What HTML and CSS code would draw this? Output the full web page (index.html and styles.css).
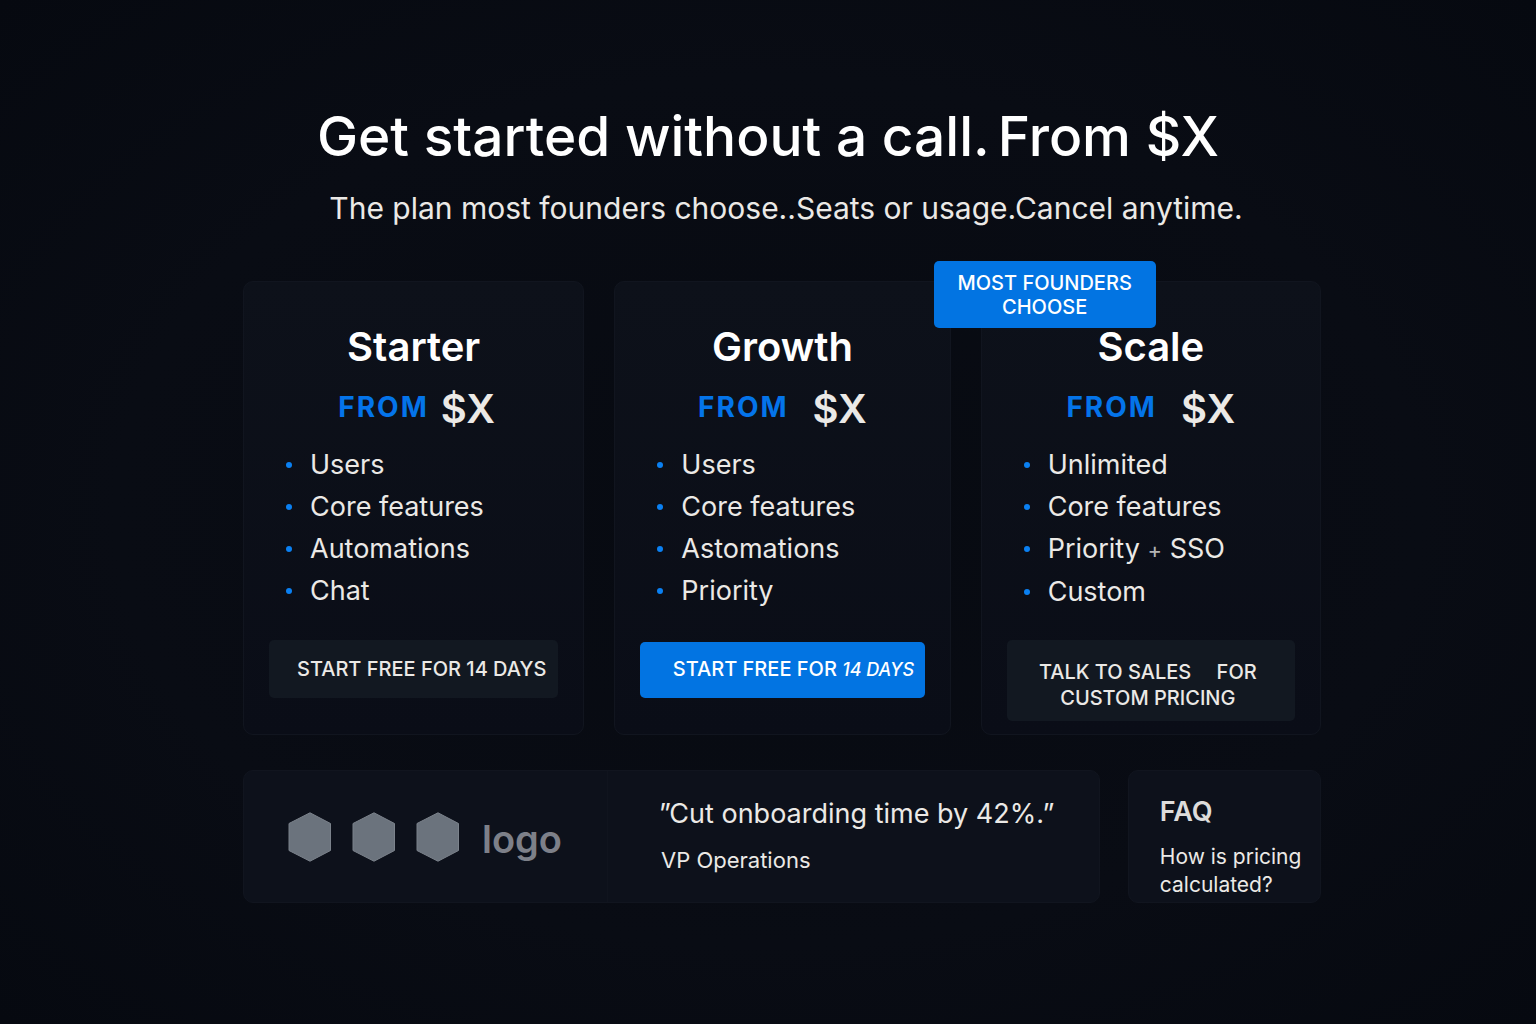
FILE: index.html
```
<!DOCTYPE html>
<html lang="en">
<head>
    <meta charset="UTF-8">
    <meta name="viewport" content="width=device-width, initial-scale=1.0">
    <title>Pricing</title>
    <link rel="stylesheet" href="styles.css">
</head>
<body>
    <header class="hero">
        <h1><span>Get started without a call.</span> <span>From $X</span></h1>
        <p>The plan most founders choose..Seats or usage.Cancel anytime.</p>
    </header>
    <main class="container">
        <section class="plans">
            <article class="card">
                <h2>Starter</h2>
                <p class="price price-tight"><span class="from">FROM</span><span class="amount">$X</span></p>
                <ul>
                    <li>Users</li>
                    <li>Core features</li>
                    <li>Automations</li>
                    <li>Chat</li>
                </ul>
                <button type="button" class="btn btn-dark btn-trial">START FREE FOR 14 DAYS</button>
            </article>
            <article class="card">
                <h2>Growth</h2>
                <p class="price"><span class="from">FROM</span><span class="amount">$X</span></p>
                <ul>
                    <li>Users</li>
                    <li>Core features</li>
                    <li>Astomations</li>
                    <li>Priority</li>
                </ul>
                <button type="button" class="btn btn-blue">START FREE FOR <em>14 DAYS</em></button>
            </article>
            <article class="card">
                <div class="badge">MOST FOUNDERS CHOOSE</div>
                <h2>Scale</h2>
                <p class="price"><span class="from">FROM</span><span class="amount">$X</span></p>
                <ul>
                    <li>Unlimited</li>
                    <li>Core features</li>
                    <li>Priority <span class="plus">+</span> SSO</li>
                    <li>Custom</li>
                </ul>
                <button type="button" class="btn btn-dark btn-sales">TALK TO SALES <span class="for">FOR</span><br>CUSTOM PRICING</button>
            </article>
        </section>
        <section class="bottom">
            <div class="panel proof">
                <div class="logos">
                    <svg class="hex" viewBox="0 0 44 50"><path d="M22 .8 42.500 11.500V38.500L22 49.200 1 38.500V11.500Z"/></svg>
                    <svg class="hex" viewBox="0 0 44 50"><path d="M22 .8 42.500 11.500V38.500L22 49.200 1 38.500V11.500Z"/></svg>
                    <svg class="hex" viewBox="0 0 44 50"><path d="M22 .8 42.500 11.500V38.500L22 49.200 1 38.500V11.500Z"/></svg>
                    <span class="logo-text">logo</span>
                </div>
                <div class="quote">
                    <blockquote>”Cut onboarding time by 42%.”</blockquote>
                    <p>VP Operations</p>
                </div>
            </div>
            <div class="panel faq">
                <h3>FAQ</h3>
                <p>How is pricing calculated?</p>
            </div>
        </section>
    </main>
</body>
</html>
```
FILE: styles.css
```
* {
    box-sizing: border-box;
}
body {
    font-family: Inter, "Liberation Sans", sans-serif;
    background: radial-gradient(ellipse at center, #070a11 0%, #090c14 60%, #060910 100%);
    color: #ebe9e6;
    min-height: 100vh;
    margin: 0;
    padding: 100px 0;
}
h1, h2, h3, p, ul, blockquote {
    margin: 0;
}
.hero {
    text-align: center;
}
.hero h1 {
    display: flex;
    justify-content: center;
    gap: 8px;
    font-size: 55px;
    line-height: 72px;
    font-weight: 500;
    color: #fff;
}
.hero p {
    font-size: 30px;
    line-height: 40px;
    margin-top: 16px;
    padding-left: 36px;
}
.container {
    max-width: 1106px;
    margin: 53px auto 0;
    padding-left: 28px;
}
.plans {
    display: grid;
    grid-template-columns: minmax(0, 341fr) minmax(0, 336fr) minmax(0, 340fr);
    gap: 30px;
}
.card {
    position: relative;
    display: flex;
    flex-direction: column;
    height: 454px;
    padding: 40px 25px 0;
    background: linear-gradient(#0d111a, #0a0d17);
    border: 1px solid #11151f;
    border-radius: 10px;
}
.card h2 {
    font-size: 40px;
    line-height: 50px;
    font-weight: 600;
    text-align: center;
    color: #fff;
}
.price {
    display: flex;
    justify-content: center;
    align-items: center;
    gap: 24px;
    height: 50px;
    margin-top: 11px;
}
.price-tight {
    gap: 12px;
    padding-left: 6px;
}
.from {
    font-size: 28px;
    line-height: 34px;
    font-weight: 700;
    letter-spacing: 2px;
    color: #0474ea;
    padding-bottom: 2px;
}
.amount {
    font-size: 40px;
    font-weight: 600;
}
.card ul {
    list-style: none;
    padding: 0 0 0 41px;
    margin-top: 11px;
}
.card li {
    position: relative;
    font-size: 27px;
    line-height: 42px;
}
.card li::before {
    content: "";
    position: absolute;
    left: -24px;
    top: 18px;
    width: 6px;
    height: 6px;
    border-radius: 50%;
    background: #0a80f2;
}
.plus {
    font-size: 22px;
    color: #b4b4b4;
}
.badge {
    position: absolute;
    left: -48px;
    top: -21px;
    width: 222px;
    padding: 10px 20px 9px;
    border-radius: 5px;
    background: #0274e2;
    color: #fff;
    font-size: 20px;
    line-height: 24px;
    font-weight: 500;
    text-align: center;
}
.btn {
    border: none;
    border-radius: 5px;
    font-family: inherit;
    font-size: 20px;
    line-height: 26px;
    font-weight: 500;
    white-space: nowrap;
    cursor: pointer;
}
.btn em {
    font-size: 18px;
}
.btn-dark {
    background: #121821;
    color: #ebe9e6;
}
.btn-trial {
    height: 58px;
    margin-top: 28px;
    padding: 0 8px 0 24px;
}
.btn-blue {
    height: 56px;
    margin-top: 30px;
    padding: 0 8px 2px 30px;
    background: #0274e2;
    color: #fff;
}
.btn-sales {
    height: 81px;
    margin-top: 27px;
    padding: 12px 14px 4px 8px;
}
.for {
    margin-left: 20px;
}
.bottom {
    display: grid;
    grid-template-columns: 856fr 193fr;
    gap: 28px;
    margin-top: 35px;
}
.panel {
    height: 133px;
    background: #0d111b;
    border: 1px solid #11151f;
    border-radius: 10px;
}
.proof {
    display: flex;
}
.logos {
    display: flex;
    align-items: center;
    gap: 20px;
    width: 364px;
    padding-left: 44px;
    border-right: 1px solid #10141e;
}
.hex {
    width: 44px;
    height: 50px;
    fill: #6b737d;
    stroke: #7b828b;
}
.logo-text {
    font-size: 38px;
    line-height: 50px;
    font-weight: 600;
    color: #7d8089;
    padding: 4px 0 0 2px;
}
.quote {
    padding: 23px 0 0 51px;
}
.quote blockquote {
    font-size: 27px;
    line-height: 40px;
}
.quote p {
    font-size: 22px;
    line-height: 28px;
    margin-top: 12px;
    padding-left: 2px;
}
.faq {
    padding: 23px 8px 0 31px;
}
.faq h3 {
    font-size: 27px;
    line-height: 36px;
    font-weight: 600;
    color: #dddcdb;
}
.faq p {
    font-size: 21px;
    line-height: 28px;
    margin-top: 13px;
}
```
